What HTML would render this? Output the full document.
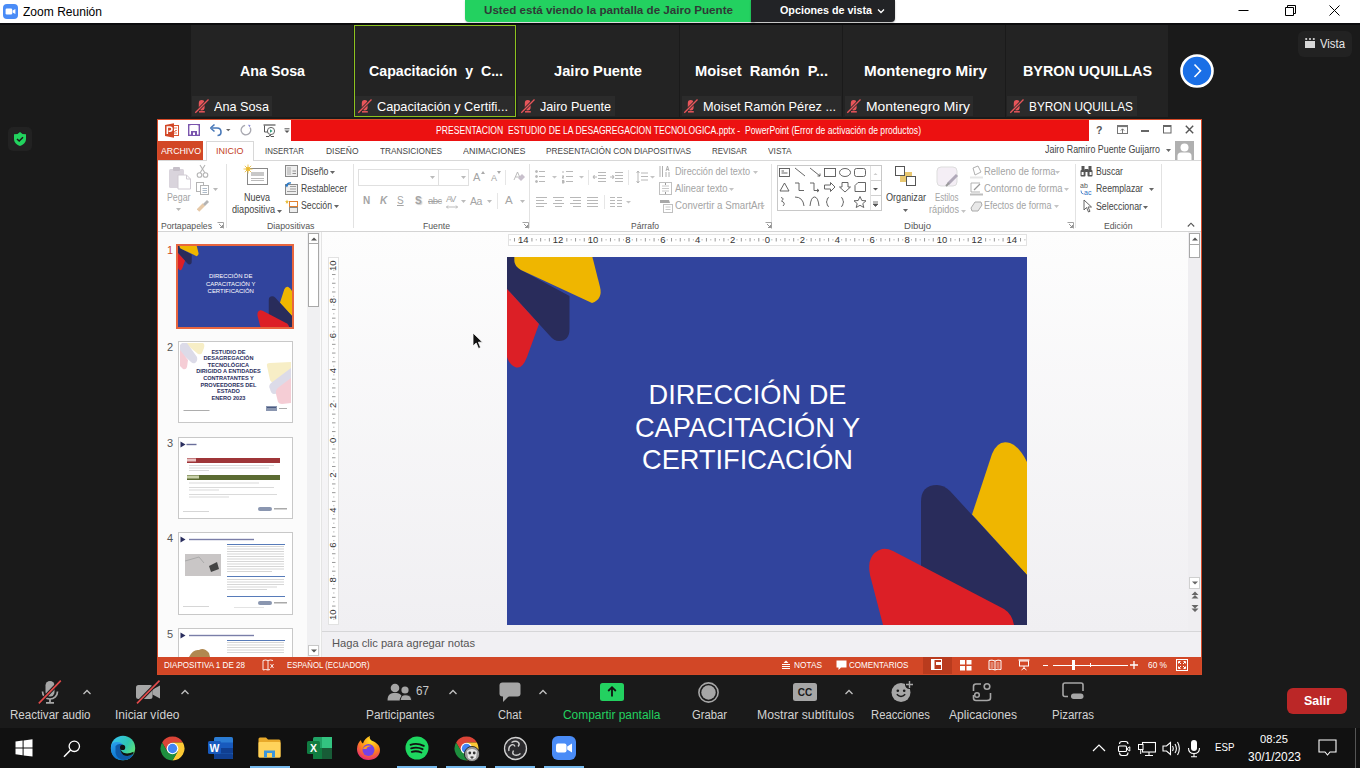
<!DOCTYPE html>
<html><head><meta charset="utf-8">
<style>
*{margin:0;padding:0;box-sizing:border-box}
html,body{width:1360px;height:768px;overflow:hidden;background:#1a1a1a;font-family:"Liberation Sans",sans-serif}
.a{position:absolute}
.t{position:absolute;white-space:nowrap;line-height:1}
.nm{top:63px;font-size:15px;font-weight:bold;color:#fff}
.lb{top:96px;height:20px;background:#2b2b2b}
.lt{top:100px;font-size:13px;color:#fff}
.mic{top:99px;width:16px;height:15px}
.car{top:688px;width:10px;height:8px}
.tb{top:709px;font-size:12px;color:#d2d2d2}
.tab{top:146px;font-size:9.5px;color:#444}
.sep{top:164px;width:1px;height:64px;background:#e2e2e2}
.gl{top:221px;font-size:9.5px;color:#555}
.lch{top:222px;width:7px;height:7px}
.rt{font-size:10px;color:#444}
.sb{top:661px;font-size:9px;color:#fff}
.rg{font-size:10px;color:#a4a4a4}
</style></head><body>
<svg width="0" height="0" style="position:absolute"><defs>
<g id="mmic"><rect x="4.8" y="1" width="5.8" height="10.5" rx="2.9" fill="#e8555a"></rect><path d="M5 12.8 H10.8" stroke="#e8555a" stroke-width="1.5"></path><path d="M1.3 13.8 L14.5 0.5" stroke="#2b2b2b" stroke-width="3"></path><path d="M1.3 13.8 L14.5 0.5" stroke="#e8555a" stroke-width="1.3"></path></g>
<g id="launch"><path d="M0.5 0.5 H6.5 V6.5" stroke="#999" stroke-width="0.9" fill="none"></path><path d="M2 2 L5.5 5.5 M5.5 3 V5.5 H3" stroke="#888" stroke-width="0.9" fill="none"></path></g>
<g id="caret"><path d="M1.5 6 L5 2.5 L8.5 6" stroke="#c0c0c0" stroke-width="1.3" fill="none"></path></g>
</defs></svg>
<!-- zoom title bar -->
<div class="a" style="left:0;top:0;width:1360px;height:23px;background:#fff"></div>
<div class="a" style="left:0;top:23px;width:1360px;height:2px;background:#0c0c0e"></div>
<svg class="a" style="left:3px;top:4px" width="15" height="15" viewBox="0 0 15 15"><rect x="0" y="0" width="15" height="15" rx="4" fill="#4a8cf7"></rect><rect x="2.6" y="4.6" width="6.6" height="5.8" rx="1.2" fill="#fff"></rect><path d="M9.6 6.6 L12.4 4.9 V10.1 L9.6 8.4Z" fill="#fff"></path></svg>
<div class="t" style="left: 23px; top: 6px; font-size: 12px; color: rgb(0, 0, 0); transform: scaleX(1.0036); transform-origin: 0px 0px;">Zoom Reunión</div>
<svg class="a" style="left:1230px;top:0" width="130" height="23"><path d="M8.5 10.5 H18.5" stroke="#000" stroke-width="1"></path><path d="M55.5 7.5 H63.5 V15.5 H55.5 Z M57.5 7.5 V5.5 H65.5 V13.5 H63.5" stroke="#000" stroke-width="1" fill="none"></path><path d="M99.5 5.5 L109.5 15.5 M109.5 5.5 L99.5 15.5" stroke="#000" stroke-width="1"></path></svg>
<!-- green banner -->
<div class="a" style="left:465px;top:0;width:290px;height:22px;background:#23d160;border-radius:0 0 0 4px;box-shadow:0 1px 2px rgba(0,0,0,.2)"></div>
<div class="t" style="left: 484px; top: 5px; font-size: 11.5px; font-weight: bold; color: rgb(47, 58, 54); transform: scaleX(1.0093); transform-origin: 0px 0px;">Usted está viendo la pantalla de Jairo Puente</div>
<div class="a" style="left:751px;top:0;width:144px;height:22px;background:#222326;border-radius:0 0 4px 0;box-shadow:0 1px 2px rgba(0,0,0,.3)"></div>
<div class="t" style="left: 780px; top: 5px; font-size: 11.5px; font-weight: bold; color: rgb(255, 255, 255); transform: scaleX(0.9346); transform-origin: 0px 0px;">Opciones de vista</div>
<svg class="a" style="left:877px;top:8px" width="8" height="6"><path d="M1 1.5 L4 4.5 L7 1.5" stroke="#fff" stroke-width="1.3" fill="none"></path></svg>
<!-- tiles -->
<div class="a" style="left:191px;top:25px;width:162px;height:92px;background:#232323"></div>
<div class="a" style="left:354px;top:25px;width:162px;height:92px;background:#232323;border:1px solid #8cc21f"></div>
<div class="a" style="left:517px;top:25px;width:162px;height:92px;background:#232323"></div>
<div class="a" style="left:680px;top:25px;width:162px;height:92px;background:#232323"></div>
<div class="a" style="left:843px;top:25px;width:162px;height:92px;background:#232323"></div>
<div class="a" style="left:1006px;top:25px;width:162px;height:92px;background:#232323"></div>
<div class="t nm" style="left: 240px; transform: scaleX(0.9509); transform-origin: 0px 0px;">Ana Sosa</div>
<div class="t nm" style="left: 369px; transform: scaleX(0.9455); transform-origin: 0px 0px;">Capacitación&nbsp; y&nbsp; C...</div>
<div class="t nm" style="left: 554px; transform: scaleX(0.9774); transform-origin: 0px 0px;">Jairo Puente</div>
<div class="t nm" style="left: 695px; transform: scaleX(0.9809); transform-origin: 0px 0px;">Moiset&nbsp; Ramón&nbsp; P...</div>
<div class="t nm" style="left: 864px; transform: scaleX(1.0178); transform-origin: 0px 0px;">Montenegro Miry</div>
<div class="t nm" style="left: 1023px; transform: scaleX(0.9556); transform-origin: 0px 0px;">BYRON UQUILLAS</div>
<div class="a lb" style="left:192px;width:80px"></div>
<div class="a lb" style="left:355px;width:159px"></div>
<div class="a lb" style="left:518px;width:97px"></div>
<div class="a lb" style="left:682px;width:159px"></div>
<div class="a lb" style="left:845px;width:128px"></div>
<div class="a lb" style="left:1007px;width:130px"></div>
<svg class="a mic" style="left:194px"><use href="#mmic"></use></svg>
<svg class="a mic" style="left:357px"><use href="#mmic"></use></svg>
<svg class="a mic" style="left:520px"><use href="#mmic"></use></svg>
<svg class="a mic" style="left:683px"><use href="#mmic"></use></svg>
<svg class="a mic" style="left:846px"><use href="#mmic"></use></svg>
<svg class="a mic" style="left:1009px"><use href="#mmic"></use></svg>
<div class="t lt" style="left: 214px; transform: scaleX(0.9756); transform-origin: 0px 0px;">Ana Sosa</div>
<div class="t lt" style="left: 377px; transform: scaleX(0.98); transform-origin: 0px 0px;">Capacitación y Certifi...</div>
<div class="t lt" style="left: 540px; transform: scaleX(0.9726); transform-origin: 0px 0px;">Jairo Puente</div>
<div class="t lt" style="left: 703px; transform: scaleX(0.9792); transform-origin: 0px 0px;">Moiset Ramón Pérez ...</div>
<div class="t lt" style="left: 866px; transform: scaleX(1.0662); transform-origin: 0px 0px;">Montenegro Miry</div>
<div class="t lt" style="left: 1029px; transform: scaleX(0.911); transform-origin: 0px 0px;">BYRON UQUILLAS</div>
<!-- next arrow -->
<svg class="a" style="left:1180px;top:54px" width="34" height="34"><circle cx="17" cy="17" r="15.5" fill="#1a6fe6" stroke="#fff" stroke-width="2.6"></circle><path d="M14.5 10.5 L20.5 16.8 L14.5 23" stroke="#fff" stroke-width="1.6" fill="none"></path></svg>
<!-- Vista -->
<div class="a" style="left:1298px;top:31px;width:54px;height:26px;background:#222;border-radius:6px"></div>
<svg class="a" style="left:1304px;top:37px" width="12" height="12"><rect x="1" y="4" width="10" height="7" fill="#d8d8d8"></rect><circle cx="2.2" cy="2" r="1.1" fill="#d8d8d8"></circle><circle cx="6" cy="2" r="1.1" fill="#d8d8d8"></circle><circle cx="9.8" cy="2" r="1.1" fill="#d8d8d8"></circle></svg>
<div class="t" style="left: 1320px; top: 38px; font-size: 12px; color: rgb(232, 232, 232); transform: scaleX(0.9445); transform-origin: 0px 0px;">Vista</div>
<!-- shield -->
<div class="a" style="left:8px;top:127px;width:24px;height:24px;background:#222;border-radius:5px"></div>
<svg class="a" style="left:13px;top:131px" width="14" height="16" viewBox="0 0 14 16"><path d="M7 1 L9.5 3 L13 3.3 V8 C13 11.5 10 14 7 15 C4 14 1 11.5 1 8 V3.3 L4.5 3 Z" fill="#22d35e"></path><path d="M4 8 L6.2 10 L10 6.2" stroke="#1a1a1a" stroke-width="1.5" fill="none"></path></svg>
<!-- PPT window -->
<div class="a" style="left:157px;top:119px;width:1045px;height:556px;background:#fff;border:1px solid #d64a28"></div>
<div class="a" style="left:291px;top:120px;width:798px;height:21px;background:#ec1111"></div>
<!-- QAT -->
<svg class="a" style="left:165px;top:123px" width="14" height="15" viewBox="0 0 14 15"><rect x="6.5" y="2.5" width="7" height="10" fill="#fff" stroke="#d9542f" stroke-width="1"></rect><path d="M8 5 H12 M10 7.5 H12 M8 10 H12" stroke="#e07050" stroke-width="0.9"></path><path d="M8 5 V8.5 H10.5" stroke="#e07050" stroke-width="0.9" fill="none"></path><path d="M0 2 L9 0.3 V14.7 L0 13Z" fill="#d24726"></path><path d="M2.3 11 V4 H4.8 Q7 4 7 6.1 Q7 8.2 4.8 8.2 H3.6" stroke="#fff" stroke-width="1.5" fill="none"></path></svg>
<svg class="a" style="left:188px;top:124px" width="12" height="12"><rect x="0.7" y="0.7" width="10.6" height="10.6" fill="none" stroke="#7a55ad" stroke-width="1.4"></rect><rect x="2.5" y="1" width="7" height="4" fill="#fff"></rect><rect x="3" y="7" width="6" height="4" fill="#7a55ad"></rect><rect x="5" y="8.5" width="2" height="2.5" fill="#fff"></rect></svg>
<svg class="a" style="left:209px;top:123px" width="24" height="14"><path d="M3 5 H8 Q12 5 12 9 Q12 12.5 8.5 12.5" stroke="#4878b8" stroke-width="1.6" fill="none"></path><path d="M1.5 5 L5.5 1.5 M1.5 5 L5.5 8.5" stroke="#4878b8" stroke-width="1.6" fill="none"></path><path d="M17 6 H21.5 L19.25 8.3Z" fill="#666"></path></svg>
<svg class="a" style="left:240px;top:124px" width="12" height="12"><path d="M8.5 2.2 A4.8 4.8 0 1 1 3 2.2" stroke="#a8a8b0" stroke-width="1.3" fill="none" transform="rotate(25 6 6.5)"></path><path d="M8 0.8 L10.5 1 L9.6 3.6Z" fill="#8f8fd6"></path></svg>
<svg class="a" style="left:263px;top:124px" width="13" height="14"><path d="M0.5 1 H12.5" stroke="#555" stroke-width="1.2"></path><path d="M1.5 1.5 V8 H5" stroke="#555" stroke-width="1" fill="none"></path><circle cx="8" cy="7" r="3.6" fill="none" stroke="#666" stroke-width="1"></circle><path d="M7 5.3 L9.6 7 L7 8.7Z" fill="#30a080"></path><path d="M3 12.5 H6 L7 11 L8 12.5 H11" stroke="#555" stroke-width="1" fill="none"></path></svg>
<svg class="a" style="left:284px;top:128px" width="6" height="6"><path d="M0.5 0.8 H5.5" stroke="#555" stroke-width="1"></path><path d="M0.5 2.5 H5.5 L3 5Z" fill="#555"></path></svg>
<div class="t" style="left: 436px; top: 126px; font-size: 10px; color: rgb(255, 255, 255); transform: scaleX(0.8604); transform-origin: 0px 0px;">PRESENTACION&nbsp; ESTUDIO DE LA DESAGREGACION TECNOLOGICA.pptx -&nbsp; PowerPoint (Error de activación de productos)</div>
<!-- window buttons -->
<div class="t" style="left:1096px;top:125px;font-size:10.5px;font-weight:bold;color:#555">?</div>
<svg class="a" style="left:1117px;top:125px" width="12" height="10"><rect x="0.5" y="0.5" width="10" height="8" fill="none" stroke="#777" stroke-width="1"></rect><path d="M0.5 1.5 H10.5" stroke="#777" stroke-width="1.2"></path><path d="M5.5 8 V4 M3.8 5.6 L5.5 3.8 L7.2 5.6" stroke="#666" stroke-width="0.9" fill="none"></path></svg>
<div class="a" style="left:1141px;top:130px;width:8px;height:2px;background:#666"></div>
<svg class="a" style="left:1163px;top:125px" width="9" height="9"><rect x="0.5" y="0.5" width="7.5" height="7.5" fill="none" stroke="#666" stroke-width="1"></rect><path d="M0.5 1.2 H8" stroke="#666" stroke-width="1.6"></path></svg>
<svg class="a" style="left:1185px;top:125px" width="9" height="9"><path d="M0.8 0.8 L8.2 8.2 M8.2 0.8 L0.8 8.2" stroke="#555" stroke-width="1.4"></path></svg>
<!-- tabs -->
<div class="a" style="left:158px;top:160px;width:1043px;height:1px;background:#d8d8d8"></div>
<div class="a" style="left:158px;top:141px;width:45px;height:19px;background:#d24726"></div>
<div class="a" style="left:206px;top:141px;width:48px;height:20px;background:#fff;border:1px solid #d8d8d8;border-bottom:none"></div>
<div class="t tab" style="left: 161px; color: rgb(255, 255, 255); transform: scaleX(0.9239); transform-origin: 0px 0px;">ARCHIVO</div>
<div class="t tab" style="left: 216px; color: rgb(196, 62, 28); transform: scaleX(0.9473); transform-origin: 0px 0px;">INICIO</div>
<div class="t tab" style="left: 265px; transform: scaleX(0.8268); transform-origin: 0px 0px;">INSERTAR</div>
<div class="t tab" style="left: 325.5px; transform: scaleX(0.8919); transform-origin: 0px 0px;">DISEÑO</div>
<div class="t tab" style="left: 379.5px; transform: scaleX(0.87); transform-origin: 0px 0px;">TRANSICIONES</div>
<div class="t tab" style="left: 462.5px; transform: scaleX(0.9396); transform-origin: 0px 0px;">ANIMACIONES</div>
<div class="t tab" style="left: 546px; transform: scaleX(0.8738); transform-origin: 0px 0px;">PRESENTACIÓN CON DIAPOSITIVAS</div>
<div class="t tab" style="left: 712px; transform: scaleX(0.839); transform-origin: 0px 0px;">REVISAR</div>
<div class="t tab" style="left: 767.5px; transform: scaleX(0.8785); transform-origin: 0px 0px;">VISTA</div>
<div class="t" style="left: 1045px; top: 145px; font-size: 10px; color: rgb(68, 68, 68); transform: scaleX(0.888); transform-origin: 0px 0px;">Jairo Ramiro Puente Guijarro</div>
<svg class="a" style="left:1166px;top:149px" width="5" height="3"><path d="M0 0 H5 L2.5 3Z" fill="#666"></path></svg>
<svg class="a" style="left:1175px;top:141px" width="19" height="19"><rect width="19" height="19" fill="#b0b0b0"></rect><circle cx="9.5" cy="6.5" r="4" fill="#fff"></circle><path d="M2.5 19 V15 Q2.5 11.5 6 11.5 H13 Q16.5 11.5 16.5 15 V19Z" fill="#fff"></path></svg>
<!-- ribbon -->
<div class="a" style="left:158px;top:231px;width:1043px;height:1px;background:#d4d4d4"></div>
<div class="a sep" style="left:226px"></div>
<div class="a sep" style="left:353px"></div>
<div class="a sep" style="left:529px"></div>
<div class="a sep" style="left:771px"></div>
<div class="a sep" style="left:1075px"></div>
<div class="a sep" style="left:1161px"></div>
<div class="t gl" style="left: 160.5px; transform: scaleX(0.911); transform-origin: 0px 0px;">Portapapeles</div>
<div class="t gl" style="left: 266.5px; transform: scaleX(0.9274); transform-origin: 0px 0px;">Diapositivas</div>
<div class="t gl" style="left: 422.5px; transform: scaleX(0.9128); transform-origin: 0px 0px;">Fuente</div>
<div class="t gl" style="left: 630.5px; transform: scaleX(0.8987); transform-origin: 0px 0px;">Párrafo</div>
<div class="t gl" style="left: 904px; transform: scaleX(1.0023); transform-origin: 0px 0px;">Dibujo</div>
<div class="t gl" style="left: 1103.5px; transform: scaleX(0.9143); transform-origin: 0px 0px;">Edición</div>
<svg class="a lch" style="left:217px"><use href="#launch"></use></svg>
<svg class="a lch" style="left:522px"><use href="#launch"></use></svg>
<svg class="a lch" style="left:765px"><use href="#launch"></use></svg>
<svg class="a lch" style="left:1067px"><use href="#launch"></use></svg>
<svg class="a" style="left:1187px;top:222px" width="8" height="5"><path d="M0.8 4.5 L4 1.2 L7.2 4.5" stroke="#555" stroke-width="1.1" fill="none"></path></svg>
<!-- Portapapeles -->
<svg class="a" style="left:168px;top:166px" width="24" height="24"><rect x="1" y="3" width="15" height="19" rx="1.5" fill="#d9d4dc"></rect><rect x="5" y="1" width="7" height="4" rx="1" fill="#c6c0c9"></rect><path d="M10 9 H18.5 L22.5 13 V23 H10Z" fill="#fff" stroke="#d0cbd3" stroke-width="1"></path><path d="M18.5 9 V13 H22.5" fill="none" stroke="#d0cbd3" stroke-width="1"></path></svg>
<div class="t rg" style="left: 167px; top: 193px; transform: scaleX(0.8806); transform-origin: 0px 0px;">Pegar</div>
<svg class="a" style="left:176px;top:208px" width="5" height="3"><path d="M0 0 H5 L2.5 3Z" fill="#b8b8b8"></path></svg>
<svg class="a" style="left:196px;top:164px" width="13" height="14"><path d="M4 1 L9 9 M9 1 L4 9" stroke="#b4b4b4" stroke-width="1.1"></path><circle cx="3.5" cy="11" r="2.3" fill="none" stroke="#b4b4b4" stroke-width="1.1"></circle><circle cx="9.5" cy="11" r="2.3" fill="none" stroke="#b4b4b4" stroke-width="1.1"></circle></svg>
<svg class="a" style="left:196px;top:182px" width="14" height="13"><rect x="0.5" y="0.5" width="7" height="9" fill="#fff" stroke="#b4b4b4"></rect><rect x="4.5" y="3.5" width="8" height="9" fill="#fff" stroke="#b4b4b4"></rect><path d="M6.5 6.5 H11 M6.5 8.5 H11 M6.5 10.5 H11" stroke="#9ab" stroke-width="0.8"></path></svg>
<svg class="a" style="left:213px;top:188px" width="5" height="3"><path d="M0 0 H5 L2.5 3Z" fill="#b8b8b8"></path></svg>
<svg class="a" style="left:197px;top:199px" width="13" height="13"><path d="M1 11.5 L7 5.5" stroke="#e6c9a8" stroke-width="3.5"></path><path d="M6 5 L10 1 L12 3 L8 7Z" fill="#b4b4b4"></path></svg>
<!-- Diapositivas -->
<svg class="a" style="left:242px;top:164px" width="27" height="23"><rect x="5.5" y="4.5" width="20" height="16" fill="#fff" stroke="#888" stroke-width="1"></rect><rect x="9" y="8" width="13" height="4" fill="#c8c8c8"></rect><path d="M9 14.5 H22 M9 16.5 H22" stroke="#aaa" stroke-width="0.8"></path><circle cx="6" cy="5" r="2.3" fill="#f3c94b"></circle><path d="M6 0.5 V9.5 M1.5 5 H10.5 M2.8 1.8 L9.2 8.2 M9.2 1.8 L2.8 8.2" stroke="#e8b830" stroke-width="0.8"></path></svg>
<div class="t rt" style="left: 243.5px; top: 193px; transform: scaleX(0.8995); transform-origin: 0px 0px;">Nueva</div>
<div class="t rt" style="left: 232px; top: 205px; transform: scaleX(0.9098); transform-origin: 0px 0px;">diapositiva</div>
<svg class="a" style="left:277px;top:210px" width="5" height="3"><path d="M0 0 H5 L2.5 3Z" fill="#666"></path></svg>
<svg class="a" style="left:285px;top:165px" width="14" height="13"><rect x="0.5" y="0.5" width="12" height="11" fill="#eee" stroke="#888"></rect><rect x="2" y="2" width="4" height="8" fill="#ccc"></rect><path d="M7.5 6 H11 M7.5 8.5 H11" stroke="#777" stroke-width="0.8"></path></svg>
<div class="t rt" style="left: 300.5px; top: 167px; transform: scaleX(0.8831); transform-origin: 0px 0px;">Diseño</div>
<svg class="a" style="left:330px;top:171px" width="5" height="3"><path d="M0 0 H5 L2.5 3Z" fill="#666"></path></svg>
<svg class="a" style="left:285px;top:182px" width="14" height="13"><rect x="0.5" y="2.5" width="12" height="10" fill="#eee" stroke="#888"></rect><path d="M5 4.5 H11 M5 7 H11 M2 9.5 H11" stroke="#888" stroke-width="0.8"></path><path d="M1.5 4 Q2 0.5 6 1" stroke="#2a7ac8" stroke-width="1.3" fill="none"></path><path d="M0 3 L2 5.5 L3.5 2.5Z" fill="#2a7ac8"></path></svg>
<div class="t rt" style="left: 300.5px; top: 184px; transform: scaleX(0.8621); transform-origin: 0px 0px;">Restablecer</div>
<svg class="a" style="left:285px;top:199px" width="14" height="14"><rect x="4.5" y="2.5" width="8" height="5" fill="#fff" stroke="#e08030"></rect><rect x="4.5" y="8.5" width="8" height="5" fill="#eee" stroke="#888"></rect><path d="M2 0.5 L2.6 2 L4 2.2 L2.9 3.2 L3.2 4.8 L2 4 L0.8 4.8 L1.1 3.2 L0 2.2 L1.4 2Z" fill="#e8c040"></path></svg>
<div class="t rt" style="left: 300.5px; top: 201px; transform: scaleX(0.8713); transform-origin: 0px 0px;">Sección</div>
<svg class="a" style="left:334px;top:205px" width="5" height="3"><path d="M0 0 H5 L2.5 3Z" fill="#666"></path></svg>
<!-- Fuente -->
<div class="a" style="left:358px;top:169px;width:111px;height:17px;border:1px solid #e0e0e0;background:#fff"></div>
<div class="a" style="left:438px;top:170px;width:1px;height:15px;background:#e0e0e0"></div>
<svg class="a" style="left:430px;top:176px" width="5" height="3"><path d="M0 0 H5 L2.5 3Z" fill="#bbb"></path></svg>
<svg class="a" style="left:461px;top:176px" width="5" height="3"><path d="M0 0 H5 L2.5 3Z" fill="#bbb"></path></svg>
<div class="t rg" style="left:473px;top:172px;font-size:11px">A</div>
<svg class="a" style="left:481px;top:171px" width="4" height="3"><path d="M0 3 L2 0 L4 3Z" fill="#aaa"></path></svg>
<div class="t rg" style="left:491px;top:174px;font-size:9px">A</div>
<svg class="a" style="left:497px;top:171px" width="4" height="3"><path d="M0 0 H4 L2 3Z" fill="#aaa"></path></svg>
<div class="a" style="left:505px;top:170px;width:1px;height:15px;background:#e6e6e6"></div>
<svg class="a" style="left:513px;top:171px" width="12" height="11"><path d="M1 9 L4.5 1 L8 9 M2.5 6 H6.5" stroke="#b4b4b4" stroke-width="0.9" fill="none"></path><path d="M5 7 L9 3 L12 6 L8 10Z" fill="#c8c0cc"></path></svg>
<div class="t rg" style="left:363px;top:196px;font-size:10px;font-weight:bold">N</div>
<div class="t rg" style="left:380px;top:196px;font-size:10px;font-style:italic;font-weight:bold">K</div>
<div class="t rg" style="left:397px;top:196px;font-size:10px;text-decoration:underline">S</div>
<div class="t rg" style="left:415px;top:196px;font-size:10px;font-weight:bold;text-shadow:1px 1px 1px #ccc">S</div>
<div class="t rg" style="left:428px;top:196px;font-size:9.5px;letter-spacing:-0.5px;text-decoration:line-through">abc</div>
<div class="t rg" style="left:446px;top:195px;font-size:9px;letter-spacing:-1px">AV</div>
<svg class="a" style="left:446px;top:205px" width="12" height="4"><path d="M0.5 2 H11.5 M2 0.5 L0.5 2 L2 3.5 M10 0.5 L11.5 2 L10 3.5" stroke="#aaa" stroke-width="0.8" fill="none"></path></svg>
<svg class="a" style="left:461px;top:200px" width="5" height="3"><path d="M0 0 H5 L2.5 3Z" fill="#bbb"></path></svg>
<div class="t rg" style="left:470px;top:196px;font-size:10.5px;letter-spacing:-0.5px">Aa</div>
<svg class="a" style="left:487px;top:200px" width="5" height="3"><path d="M0 0 H5 L2.5 3Z" fill="#bbb"></path></svg>
<div class="a" style="left:497px;top:193px;width:1px;height:16px;background:#e6e6e6"></div>
<div class="t rg" style="left:505px;top:195px;font-size:11.5px">A</div>
<svg class="a" style="left:520px;top:200px" width="5" height="3"><path d="M0 0 H5 L2.5 3Z" fill="#bbb"></path></svg>
<!-- Parrafo -->
<svg class="a" style="left:535px;top:170px" width="120" height="16"><g stroke="#b8b8b8" stroke-width="1" fill="#b8b8b8"><circle cx="1.5" cy="1.5" r="1"></circle><circle cx="1.5" cy="6.5" r="1"></circle><circle cx="1.5" cy="11.5" r="1"></circle><path d="M4 1.5 H10 M4 6.5 H10 M4 11.5 H10"></path><path d="M28 1 V3 M27 6 H29 L27 8 H29 M27 10.5 H29 V13 H27"></path><path d="M31 1.5 H38 M31 6.5 H38 M31 11.5 H38"></path><path d="M63 2.5 H71 M63 5.5 H71 M63 8.5 H71 M63 11.5 H71 M58 7 H62 M59.5 5 L58 7 L59.5 9"></path><path d="M80 2.5 H88 M80 5.5 H88 M80 8.5 H88 M80 11.5 H88 M75 7 H79 M77.5 5 L79 7 L77.5 9"></path><path d="M106 3 H113 M106 6.5 H113 M106 10 H113 M103 1 V13 M101.5 2.5 L103 1 L104.5 2.5 M101.5 11.5 L103 13 L104.5 11.5"></path></g><path d="M17 6 H22 L19.5 8.5Z M44 6 H49 L46.5 8.5Z M115 6 H120 L117.5 8.5Z" fill="#c4c4c4"></path><path d="M53.5 0 V15 M93.5 0 V15" stroke="#e6e6e6"></path></svg>
<svg class="a" style="left:535px;top:195px" width="96" height="14"><g stroke="#b8b8b8" stroke-width="1"><path d="M1 2.5 H12 M1 5.5 H9 M1 8.5 H12 M1 11.5 H9"></path><path d="M18 2.5 H29 M20 5.5 H27 M18 8.5 H29 M20 11.5 H27"></path><path d="M35 2.5 H46 M38 5.5 H46 M35 8.5 H46 M38 11.5 H46"></path><path d="M52 2.5 H63 M52 5.5 H63 M52 8.5 H63 M52 11.5 H63"></path><path d="M75 2.5 H80 M75 5.5 H80 M75 8.5 H80 M75 11.5 H80 M82 2.5 H87 M82 5.5 H87 M82 8.5 H87 M82 11.5 H87"></path></g><path d="M69.5 0 V14" stroke="#e6e6e6"></path><path d="M91 6 H96 L93.5 8.5Z" fill="#c4c4c4"></path></svg>
<svg class="a" style="left:659px;top:165px" width="14" height="13"><path d="M1 1 V12 M3.5 1 V12 M7 12 V7 M10 12 V7" stroke="#b0b0b0" stroke-width="1"></path><path d="M7 6 L8.5 1 L10 6 M7.6 4.5 H9.4" stroke="#a8a8a8" stroke-width="0.9" fill="none"></path></svg>
<div class="t rg" style="left: 675px; top: 167px; transform: scaleX(0.9117); transform-origin: 0px 0px;">Dirección del texto</div>
<svg class="a" style="left:753px;top:171px" width="5" height="3"><path d="M0 0 H5 L2.5 3Z" fill="#c4c4c4"></path></svg>
<svg class="a" style="left:659px;top:182px" width="14" height="13"><rect x="0.5" y="0.5" width="12" height="12" fill="none" stroke="#c0c0c0"></rect><path d="M3 4 H10 M3 6.5 H10 M3 9 H10" stroke="#c8c8c8"></path><path d="M6.5 1 V3 M6.5 10 V12" stroke="#999"></path></svg>
<div class="t rg" style="left: 675px; top: 184px; transform: scaleX(0.9444); transform-origin: 0px 0px;">Alinear texto</div>
<svg class="a" style="left:729px;top:188px" width="5" height="3"><path d="M0 0 H5 L2.5 3Z" fill="#c4c4c4"></path></svg>
<svg class="a" style="left:659px;top:199px" width="15" height="14"><path d="M1 1 H10 L11 4 H1Z" fill="#a8a8a8"></path><rect x="4.5" y="5.5" width="9" height="8" fill="#fff" stroke="#c0c0c0"></rect><path d="M6.5 8 H11.5 M6.5 10.5 H11.5" stroke="#c8c8c8"></path></svg>
<div class="t rg" style="left: 675px; top: 201px; transform: scaleX(0.971); transform-origin: 0px 0px;">Convertir a SmartArt</div>
<svg class="a" style="left:760px;top:205px" width="5" height="3"><path d="M0 0 H5 L2.5 3Z" fill="#c4c4c4"></path></svg>
<!-- Dibujo -->
<div class="a" style="left:777px;top:165px;width:105px;height:46px;border:1px solid #c8c8c8;background:#fff"></div>
<div class="a" style="left:870px;top:166px;width:1px;height:44px;background:#e0e0e0"></div>
<div class="a" style="left:871px;top:180px;width:10px;height:1px;background:#d0d0d0"></div>
<div class="a" style="left:871px;top:195px;width:10px;height:1px;background:#d0d0d0"></div>
<svg class="a" style="left:778px;top:166px" width="104" height="45"><g stroke="#555" stroke-width="0.9" fill="none"><rect x="1.5" y="2.5" width="10" height="8"></rect><path d="M3.5 5 H6 M3.5 7 H9.5"></path><path d="M17 2 L27 10"></path><path d="M32 2 L42 10 M39.5 10 H42 V7.5"></path><rect x="46.5" y="2.5" width="11" height="8"></rect><ellipse cx="67" cy="6.5" rx="5.5" ry="4"></ellipse><rect x="76.5" y="2.5" width="11" height="8" rx="2"></rect><path d="M2 25 L6.5 17 L11 25Z"></path><path d="M17 17 H21 V24.5 H26"></path><path d="M32 17 H36 V24.5 H41 M39 23 L41 24.5 L39 26"></path><path d="M46.5 19 H52.5 V16.5 L57 21 L52.5 25.5 V23 H46.5Z"></path><path d="M64 16.5 H70 V21 H72.5 L67 26 L61.5 21 H64Z"></path><path d="M77 25.5 V19.5 L80 16.5 H87.5 V25.5Z"></path><path d="M3 31.5 Q7 32.5 3.5 35 Q8 37 5 40"></path><path d="M17 31 Q25 31 26 40"></path><path d="M32 40 Q33 31 36.5 31 Q40 31 41 40"></path><path d="M51 31.5 Q49 31.5 49 34.5 Q49 36 48 36 Q49 36 49 37.5 Q49 40.5 51 40.5"></path><path d="M63 31.5 Q65 31.5 65 34.5 Q65 36 66 36 Q65 36 65 37.5 Q65 40.5 63 40.5"></path><path d="M82 30.5 L83.8 34.5 L88 34.8 L84.8 37.6 L85.8 41.5 L82 39.3 L78.2 41.5 L79.2 37.6 L76 34.8 L80.2 34.5Z"></path></g><path d="M95.5 9 L97.5 7 L99.5 9Z" fill="#ccc"></path><path d="M95 22 H100 L97.5 24.5Z" fill="#555"></path><path d="M95 36 H100 M95 38 H100 L97.5 40.5Z" stroke="#555" stroke-width="0.8" fill="#555"></path></svg>
<svg class="a" style="left:894px;top:165px" width="23" height="23"><rect x="6" y="7" width="12" height="10" fill="#e8c770"></rect><rect x="1.5" y="1.5" width="9" height="9" fill="#fff" stroke="#555"></rect><rect x="12.5" y="11.5" width="9" height="9" fill="#fff" stroke="#555"></rect></svg>
<div class="t rt" style="left: 885.5px; top: 193px; transform: scaleX(0.911); transform-origin: 0px 0px;">Organizar</div>
<svg class="a" style="left:903px;top:209px" width="5" height="3"><path d="M0 0 H5 L2.5 3Z" fill="#666"></path></svg>
<svg class="a" style="left:936px;top:166px" width="24" height="24"><rect x="1" y="1" width="20" height="19" rx="4" fill="#f4eef5" stroke="#ddd"></rect><path d="M12 18 L21 9" stroke="#b0a8b8" stroke-width="3"></path><path d="M10 20 L13 17" stroke="#999" stroke-width="2"></path></svg>
<div class="t rg" style="left: 935px; top: 193px; transform: scaleX(0.7979); transform-origin: 0px 0px;">Estilos</div>
<div class="t rg" style="left: 929px; top: 205px; transform: scaleX(0.9143); transform-origin: 0px 0px;">rápidos</div>
<svg class="a" style="left:961px;top:210px" width="5" height="3"><path d="M0 0 H5 L2.5 3Z" fill="#c4c4c4"></path></svg>
<svg class="a" style="left:969px;top:165px" width="15" height="14"><path d="M4 3 L9 1 L12 7 L6 10Z" fill="#fff" stroke="#b0b0b0"></path><path d="M1 12.5 H14" stroke="#e6e6e6" stroke-width="2"></path></svg>
<div class="t rg" style="left: 984px; top: 167px; transform: scaleX(0.9389); transform-origin: 0px 0px;">Relleno de forma</div>
<svg class="a" style="left:1055px;top:171px" width="5" height="3"><path d="M0 0 H5 L2.5 3Z" fill="#c4c4c4"></path></svg>
<svg class="a" style="left:969px;top:182px" width="15" height="14"><path d="M2 1 H11 M2 1 V10 H11" stroke="#aaa" stroke-width="0.9" fill="none"></path><path d="M5 8 L11 2" stroke="#999" stroke-width="1.3"></path><path d="M1 12.5 H14" stroke="#bdbdbd" stroke-width="2"></path></svg>
<div class="t rg" style="left: 984px; top: 184px; transform: scaleX(0.9414); transform-origin: 0px 0px;">Contorno de forma</div>
<svg class="a" style="left:1064px;top:188px" width="5" height="3"><path d="M0 0 H5 L2.5 3Z" fill="#c4c4c4"></path></svg>
<svg class="a" style="left:969px;top:199px" width="15" height="14"><path d="M2 9 L6 3 H12 L13 6 L9 12 H3Z" fill="#e8e8e8" stroke="#aaa"></path></svg>
<div class="t rg" style="left: 984px; top: 201px; transform: scaleX(0.8929); transform-origin: 0px 0px;">Efectos de forma</div>
<svg class="a" style="left:1054px;top:205px" width="5" height="3"><path d="M0 0 H5 L2.5 3Z" fill="#c4c4c4"></path></svg>
<!-- Edicion -->
<svg class="a" style="left:1080px;top:165px" width="13" height="12"><g fill="#555"><rect x="0.5" y="5" width="5" height="6.5" rx="1"></rect><rect x="7.5" y="5" width="5" height="6.5" rx="1"></rect><rect x="1.5" y="1" width="3" height="4"></rect><rect x="8.5" y="1" width="3" height="4"></rect><rect x="4.5" y="4" width="4" height="3"></rect></g><rect x="1.6" y="7" width="2" height="3" fill="#fff"></rect><rect x="9.6" y="7" width="2" height="3" fill="#fff"></rect></svg>
<div class="t rt" style="left: 1095.5px; top: 167px; transform: scaleX(0.8675); transform-origin: 0px 0px;">Buscar</div>
<svg class="a" style="left:1080px;top:182px" width="14" height="14"><text x="0" y="6" font-family="Liberation Sans" font-size="7" fill="#555">ab</text><text x="4" y="12.5" font-family="Liberation Sans" font-size="7" fill="#2b6fc4">ac</text><path d="M1 8.5 Q1 12 3.5 12" stroke="#2b6fc4" stroke-width="0.8" fill="none"></path></svg>
<div class="t rt" style="left: 1095.5px; top: 184px; transform: scaleX(0.8716); transform-origin: 0px 0px;">Reemplazar</div>
<svg class="a" style="left:1149px;top:188px" width="5" height="3"><path d="M0 0 H5 L2.5 3Z" fill="#666"></path></svg>
<svg class="a" style="left:1083px;top:199px" width="9" height="14"><path d="M1 1 V11 L3.5 8.5 L5.5 13 L7 12.3 L5 8 H8.5Z" fill="#fff" stroke="#555" stroke-width="0.9"></path></svg>
<div class="t rt" style="left: 1095.5px; top: 202px; transform: scaleX(0.8801); transform-origin: 0px 0px;">Seleccionar</div>
<svg class="a" style="left:1143px;top:206px" width="5" height="3"><path d="M0 0 H5 L2.5 3Z" fill="#666"></path></svg>
<!-- main area -->
<div class="a" style="left:158px;top:232px;width:164px;height:425px;background:#fbfbfb"></div>
<div class="a" style="left:307px;top:232px;width:13px;height:425px;background:#f0f0f2"></div>
<div class="a" style="left:321px;top:232px;width:1px;height:425px;background:#e4e4e4"></div>
<div class="a" style="left:308px;top:233px;width:11px;height:11px;background:#fff;border:1px solid #a8a8a8"></div>
<svg class="a" style="left:311px;top:237px" width="6" height="4"><path d="M0 3.5 L3 0.5 L6 3.5Z" fill="#555"></path></svg>
<div class="a" style="left:308px;top:243px;width:11px;height:64px;background:#fff;border:1px solid #a8a8a8"></div>
<div class="a" style="left:308px;top:645px;width:11px;height:11px;background:#fff;border:1px solid #c8c8c8"></div>
<svg class="a" style="left:311px;top:649px" width="6" height="4"><path d="M0 0.5 L3 3.5 L6 0.5Z" fill="#555"></path></svg>
<div class="a" style="left:322px;top:232px;width:866px;height:399px;background:linear-gradient(#fdfdfd,#f0eff2)"></div>
<div class="a" style="left:322px;top:631px;width:879px;height:1px;background:#d6d6d8"></div>
<div class="a" style="left:322px;top:632px;width:879px;height:25px;background:#f1f0f3"></div>
<div class="t" style="left: 332px; top: 638px; font-size: 11.5px; color: rgb(85, 85, 85); transform: scaleX(0.9684); transform-origin: 0px 0px;">Haga clic para agregar notas</div>
<div class="a" style="left:1188px;top:232px;width:13px;height:399px;background:#efeef1"></div>
<div class="a" style="left:1189px;top:233px;width:11px;height:12px;background:#fff;border:1px solid #a8a8a8"></div>
<svg class="a" style="left:1192px;top:237px" width="6" height="4"><path d="M0 3.5 L3 0.5 L6 3.5Z" fill="#555"></path></svg>
<div class="a" style="left:1189px;top:244px;width:11px;height:14px;background:#fff;border:1px solid #a8a8a8"></div>
<div class="a" style="left:1189px;top:577px;width:11px;height:12px;background:#fff;border:1px solid #d0d0d0"></div>
<svg class="a" style="left:1192px;top:581px" width="6" height="4"><path d="M0 0.5 L3 3.5 L6 0.5Z" fill="#666"></path></svg>
<svg class="a" style="left:1191px;top:591px" width="8" height="22"><path d="M0.5 4 L4 0.5 L7.5 4Z M0.5 7.5 L4 4 L7.5 7.5Z" fill="#666"></path><path d="M0.5 14 L4 17.5 L7.5 14Z M0.5 17.5 L4 21 L7.5 17.5Z" fill="#666"></path></svg>
<!-- rulers -->
<div class="a" style="left:508px;top:234px;width:519px;height:12px;background:#fff;border:1px solid #e2e2e2"></div>
<svg class="a" style="left:508px;top:234px" width="519" height="12"><rect x="1.61" y="5.2" width="1" height="1.2" fill="#aaa"></rect><rect x="5.98" y="4" width="1" height="3.5" fill="#999"></rect><rect x="10.34" y="5.2" width="1" height="1.2" fill="#aaa"></rect><text x="15.20" y="9.3" font-family="Liberation Sans" font-size="9.5" fill="#333" text-anchor="middle">14</text><rect x="19.06" y="5.2" width="1" height="1.2" fill="#aaa"></rect><rect x="23.43" y="4" width="1" height="3.5" fill="#999"></rect><rect x="27.79" y="5.2" width="1" height="1.2" fill="#aaa"></rect><rect x="32.15" y="4" width="1" height="3.5" fill="#999"></rect><rect x="36.51" y="5.2" width="1" height="1.2" fill="#aaa"></rect><rect x="40.88" y="4" width="1" height="3.5" fill="#999"></rect><rect x="45.24" y="5.2" width="1" height="1.2" fill="#aaa"></rect><text x="50.10" y="9.3" font-family="Liberation Sans" font-size="9.5" fill="#333" text-anchor="middle">12</text><rect x="53.96" y="5.2" width="1" height="1.2" fill="#aaa"></rect><rect x="58.33" y="4" width="1" height="3.5" fill="#999"></rect><rect x="62.69" y="5.2" width="1" height="1.2" fill="#aaa"></rect><rect x="67.05" y="4" width="1" height="3.5" fill="#999"></rect><rect x="71.41" y="5.2" width="1" height="1.2" fill="#aaa"></rect><rect x="75.78" y="4" width="1" height="3.5" fill="#999"></rect><rect x="80.14" y="5.2" width="1" height="1.2" fill="#aaa"></rect><text x="85.00" y="9.3" font-family="Liberation Sans" font-size="9.5" fill="#333" text-anchor="middle">10</text><rect x="88.86" y="5.2" width="1" height="1.2" fill="#aaa"></rect><rect x="93.22" y="4" width="1" height="3.5" fill="#999"></rect><rect x="97.59" y="5.2" width="1" height="1.2" fill="#aaa"></rect><rect x="101.95" y="4" width="1" height="3.5" fill="#999"></rect><rect x="106.31" y="5.2" width="1" height="1.2" fill="#aaa"></rect><rect x="110.68" y="4" width="1" height="3.5" fill="#999"></rect><rect x="115.04" y="5.2" width="1" height="1.2" fill="#aaa"></rect><text x="119.90" y="9.3" font-family="Liberation Sans" font-size="9.5" fill="#333" text-anchor="middle">8</text><rect x="123.76" y="5.2" width="1" height="1.2" fill="#aaa"></rect><rect x="128.12" y="4" width="1" height="3.5" fill="#999"></rect><rect x="132.49" y="5.2" width="1" height="1.2" fill="#aaa"></rect><rect x="136.85" y="4" width="1" height="3.5" fill="#999"></rect><rect x="141.21" y="5.2" width="1" height="1.2" fill="#aaa"></rect><rect x="145.57" y="4" width="1" height="3.5" fill="#999"></rect><rect x="149.94" y="5.2" width="1" height="1.2" fill="#aaa"></rect><text x="154.80" y="9.3" font-family="Liberation Sans" font-size="9.5" fill="#333" text-anchor="middle">6</text><rect x="158.66" y="5.2" width="1" height="1.2" fill="#aaa"></rect><rect x="163.03" y="4" width="1" height="3.5" fill="#999"></rect><rect x="167.39" y="5.2" width="1" height="1.2" fill="#aaa"></rect><rect x="171.75" y="4" width="1" height="3.5" fill="#999"></rect><rect x="176.11" y="5.2" width="1" height="1.2" fill="#aaa"></rect><rect x="180.48" y="4" width="1" height="3.5" fill="#999"></rect><rect x="184.84" y="5.2" width="1" height="1.2" fill="#aaa"></rect><text x="189.70" y="9.3" font-family="Liberation Sans" font-size="9.5" fill="#333" text-anchor="middle">4</text><rect x="193.56" y="5.2" width="1" height="1.2" fill="#aaa"></rect><rect x="197.93" y="4" width="1" height="3.5" fill="#999"></rect><rect x="202.29" y="5.2" width="1" height="1.2" fill="#aaa"></rect><rect x="206.65" y="4" width="1" height="3.5" fill="#999"></rect><rect x="211.01" y="5.2" width="1" height="1.2" fill="#aaa"></rect><rect x="215.38" y="4" width="1" height="3.5" fill="#999"></rect><rect x="219.74" y="5.2" width="1" height="1.2" fill="#aaa"></rect><text x="224.60" y="9.3" font-family="Liberation Sans" font-size="9.5" fill="#333" text-anchor="middle">2</text><rect x="228.46" y="5.2" width="1" height="1.2" fill="#aaa"></rect><rect x="232.82" y="4" width="1" height="3.5" fill="#999"></rect><rect x="237.19" y="5.2" width="1" height="1.2" fill="#aaa"></rect><rect x="241.55" y="4" width="1" height="3.5" fill="#999"></rect><rect x="245.91" y="5.2" width="1" height="1.2" fill="#aaa"></rect><rect x="250.28" y="4" width="1" height="3.5" fill="#999"></rect><rect x="254.64" y="5.2" width="1" height="1.2" fill="#aaa"></rect><text x="259.50" y="9.3" font-family="Liberation Sans" font-size="9.5" fill="#333" text-anchor="middle">0</text><rect x="263.36" y="5.2" width="1" height="1.2" fill="#aaa"></rect><rect x="267.73" y="4" width="1" height="3.5" fill="#999"></rect><rect x="272.09" y="5.2" width="1" height="1.2" fill="#aaa"></rect><rect x="276.45" y="4" width="1" height="3.5" fill="#999"></rect><rect x="280.81" y="5.2" width="1" height="1.2" fill="#aaa"></rect><rect x="285.18" y="4" width="1" height="3.5" fill="#999"></rect><rect x="289.54" y="5.2" width="1" height="1.2" fill="#aaa"></rect><text x="294.40" y="9.3" font-family="Liberation Sans" font-size="9.5" fill="#333" text-anchor="middle">2</text><rect x="298.26" y="5.2" width="1" height="1.2" fill="#aaa"></rect><rect x="302.62" y="4" width="1" height="3.5" fill="#999"></rect><rect x="306.99" y="5.2" width="1" height="1.2" fill="#aaa"></rect><rect x="311.35" y="4" width="1" height="3.5" fill="#999"></rect><rect x="315.71" y="5.2" width="1" height="1.2" fill="#aaa"></rect><rect x="320.07" y="4" width="1" height="3.5" fill="#999"></rect><rect x="324.44" y="5.2" width="1" height="1.2" fill="#aaa"></rect><text x="329.30" y="9.3" font-family="Liberation Sans" font-size="9.5" fill="#333" text-anchor="middle">4</text><rect x="333.16" y="5.2" width="1" height="1.2" fill="#aaa"></rect><rect x="337.52" y="4" width="1" height="3.5" fill="#999"></rect><rect x="341.89" y="5.2" width="1" height="1.2" fill="#aaa"></rect><rect x="346.25" y="4" width="1" height="3.5" fill="#999"></rect><rect x="350.61" y="5.2" width="1" height="1.2" fill="#aaa"></rect><rect x="354.98" y="4" width="1" height="3.5" fill="#999"></rect><rect x="359.34" y="5.2" width="1" height="1.2" fill="#aaa"></rect><text x="364.20" y="9.3" font-family="Liberation Sans" font-size="9.5" fill="#333" text-anchor="middle">6</text><rect x="368.06" y="5.2" width="1" height="1.2" fill="#aaa"></rect><rect x="372.43" y="4" width="1" height="3.5" fill="#999"></rect><rect x="376.79" y="5.2" width="1" height="1.2" fill="#aaa"></rect><rect x="381.15" y="4" width="1" height="3.5" fill="#999"></rect><rect x="385.51" y="5.2" width="1" height="1.2" fill="#aaa"></rect><rect x="389.88" y="4" width="1" height="3.5" fill="#999"></rect><rect x="394.24" y="5.2" width="1" height="1.2" fill="#aaa"></rect><text x="399.10" y="9.3" font-family="Liberation Sans" font-size="9.5" fill="#333" text-anchor="middle">8</text><rect x="402.96" y="5.2" width="1" height="1.2" fill="#aaa"></rect><rect x="407.32" y="4" width="1" height="3.5" fill="#999"></rect><rect x="411.69" y="5.2" width="1" height="1.2" fill="#aaa"></rect><rect x="416.05" y="4" width="1" height="3.5" fill="#999"></rect><rect x="420.41" y="5.2" width="1" height="1.2" fill="#aaa"></rect><rect x="424.77" y="4" width="1" height="3.5" fill="#999"></rect><rect x="429.14" y="5.2" width="1" height="1.2" fill="#aaa"></rect><text x="434.00" y="9.3" font-family="Liberation Sans" font-size="9.5" fill="#333" text-anchor="middle">10</text><rect x="437.86" y="5.2" width="1" height="1.2" fill="#aaa"></rect><rect x="442.23" y="4" width="1" height="3.5" fill="#999"></rect><rect x="446.59" y="5.2" width="1" height="1.2" fill="#aaa"></rect><rect x="450.95" y="4" width="1" height="3.5" fill="#999"></rect><rect x="455.31" y="5.2" width="1" height="1.2" fill="#aaa"></rect><rect x="459.67" y="4" width="1" height="3.5" fill="#999"></rect><rect x="464.04" y="5.2" width="1" height="1.2" fill="#aaa"></rect><text x="468.90" y="9.3" font-family="Liberation Sans" font-size="9.5" fill="#333" text-anchor="middle">12</text><rect x="472.76" y="5.2" width="1" height="1.2" fill="#aaa"></rect><rect x="477.12" y="4" width="1" height="3.5" fill="#999"></rect><rect x="481.49" y="5.2" width="1" height="1.2" fill="#aaa"></rect><rect x="485.85" y="4" width="1" height="3.5" fill="#999"></rect><rect x="490.21" y="5.2" width="1" height="1.2" fill="#aaa"></rect><rect x="494.57" y="4" width="1" height="3.5" fill="#999"></rect><rect x="498.94" y="5.2" width="1" height="1.2" fill="#aaa"></rect><text x="503.80" y="9.3" font-family="Liberation Sans" font-size="9.5" fill="#333" text-anchor="middle">14</text><rect x="507.66" y="5.2" width="1" height="1.2" fill="#aaa"></rect><rect x="512.02" y="4" width="1" height="3.5" fill="#999"></rect><rect x="516.39" y="5.2" width="1" height="1.2" fill="#aaa"></rect></svg>
<div class="a" style="left:328px;top:257px;width:11px;height:368px;background:#fff;border:1px solid #e2e2e2"></div>
<svg class="a" style="left:328px;top:257px" width="11" height="368"><rect x="5.2" y="3.94" width="1.2" height="1" fill="#aaa"></rect><text x="0" y="0" transform="translate(8.3 8.80) rotate(-90)" font-family="Liberation Sans" font-size="9.5" fill="#333" text-anchor="middle">10</text><rect x="5.2" y="12.66" width="1.2" height="1" fill="#aaa"></rect><rect x="4" y="17.03" width="3.5" height="1" fill="#999"></rect><rect x="5.2" y="21.39" width="1.2" height="1" fill="#aaa"></rect><rect x="4" y="25.75" width="3.5" height="1" fill="#999"></rect><rect x="5.2" y="30.11" width="1.2" height="1" fill="#aaa"></rect><rect x="4" y="34.48" width="3.5" height="1" fill="#999"></rect><rect x="5.2" y="38.84" width="1.2" height="1" fill="#aaa"></rect><text x="0" y="0" transform="translate(8.3 43.70) rotate(-90)" font-family="Liberation Sans" font-size="9.5" fill="#333" text-anchor="middle">8</text><rect x="5.2" y="47.56" width="1.2" height="1" fill="#aaa"></rect><rect x="4" y="51.93" width="3.5" height="1" fill="#999"></rect><rect x="5.2" y="56.29" width="1.2" height="1" fill="#aaa"></rect><rect x="4" y="60.65" width="3.5" height="1" fill="#999"></rect><rect x="5.2" y="65.01" width="1.2" height="1" fill="#aaa"></rect><rect x="4" y="69.38" width="3.5" height="1" fill="#999"></rect><rect x="5.2" y="73.74" width="1.2" height="1" fill="#aaa"></rect><text x="0" y="0" transform="translate(8.3 78.60) rotate(-90)" font-family="Liberation Sans" font-size="9.5" fill="#333" text-anchor="middle">6</text><rect x="5.2" y="82.46" width="1.2" height="1" fill="#aaa"></rect><rect x="4" y="86.83" width="3.5" height="1" fill="#999"></rect><rect x="5.2" y="91.19" width="1.2" height="1" fill="#aaa"></rect><rect x="4" y="95.55" width="3.5" height="1" fill="#999"></rect><rect x="5.2" y="99.91" width="1.2" height="1" fill="#aaa"></rect><rect x="4" y="104.28" width="3.5" height="1" fill="#999"></rect><rect x="5.2" y="108.64" width="1.2" height="1" fill="#aaa"></rect><text x="0" y="0" transform="translate(8.3 113.50) rotate(-90)" font-family="Liberation Sans" font-size="9.5" fill="#333" text-anchor="middle">4</text><rect x="5.2" y="117.36" width="1.2" height="1" fill="#aaa"></rect><rect x="4" y="121.73" width="3.5" height="1" fill="#999"></rect><rect x="5.2" y="126.09" width="1.2" height="1" fill="#aaa"></rect><rect x="4" y="130.45" width="3.5" height="1" fill="#999"></rect><rect x="5.2" y="134.81" width="1.2" height="1" fill="#aaa"></rect><rect x="4" y="139.18" width="3.5" height="1" fill="#999"></rect><rect x="5.2" y="143.54" width="1.2" height="1" fill="#aaa"></rect><text x="0" y="0" transform="translate(8.3 148.40) rotate(-90)" font-family="Liberation Sans" font-size="9.5" fill="#333" text-anchor="middle">2</text><rect x="5.2" y="152.26" width="1.2" height="1" fill="#aaa"></rect><rect x="4" y="156.62" width="3.5" height="1" fill="#999"></rect><rect x="5.2" y="160.99" width="1.2" height="1" fill="#aaa"></rect><rect x="4" y="165.35" width="3.5" height="1" fill="#999"></rect><rect x="5.2" y="169.71" width="1.2" height="1" fill="#aaa"></rect><rect x="4" y="174.08" width="3.5" height="1" fill="#999"></rect><rect x="5.2" y="178.44" width="1.2" height="1" fill="#aaa"></rect><text x="0" y="0" transform="translate(8.3 183.30) rotate(-90)" font-family="Liberation Sans" font-size="9.5" fill="#333" text-anchor="middle">0</text><rect x="5.2" y="187.16" width="1.2" height="1" fill="#aaa"></rect><rect x="4" y="191.53" width="3.5" height="1" fill="#999"></rect><rect x="5.2" y="195.89" width="1.2" height="1" fill="#aaa"></rect><rect x="4" y="200.25" width="3.5" height="1" fill="#999"></rect><rect x="5.2" y="204.61" width="1.2" height="1" fill="#aaa"></rect><rect x="4" y="208.98" width="3.5" height="1" fill="#999"></rect><rect x="5.2" y="213.34" width="1.2" height="1" fill="#aaa"></rect><text x="0" y="0" transform="translate(8.3 218.20) rotate(-90)" font-family="Liberation Sans" font-size="9.5" fill="#333" text-anchor="middle">2</text><rect x="5.2" y="222.06" width="1.2" height="1" fill="#aaa"></rect><rect x="4" y="226.43" width="3.5" height="1" fill="#999"></rect><rect x="5.2" y="230.79" width="1.2" height="1" fill="#aaa"></rect><rect x="4" y="235.15" width="3.5" height="1" fill="#999"></rect><rect x="5.2" y="239.51" width="1.2" height="1" fill="#aaa"></rect><rect x="4" y="243.88" width="3.5" height="1" fill="#999"></rect><rect x="5.2" y="248.24" width="1.2" height="1" fill="#aaa"></rect><text x="0" y="0" transform="translate(8.3 253.10) rotate(-90)" font-family="Liberation Sans" font-size="9.5" fill="#333" text-anchor="middle">4</text><rect x="5.2" y="256.96" width="1.2" height="1" fill="#aaa"></rect><rect x="4" y="261.32" width="3.5" height="1" fill="#999"></rect><rect x="5.2" y="265.69" width="1.2" height="1" fill="#aaa"></rect><rect x="4" y="270.05" width="3.5" height="1" fill="#999"></rect><rect x="5.2" y="274.41" width="1.2" height="1" fill="#aaa"></rect><rect x="4" y="278.77" width="3.5" height="1" fill="#999"></rect><rect x="5.2" y="283.14" width="1.2" height="1" fill="#aaa"></rect><text x="0" y="0" transform="translate(8.3 288.00) rotate(-90)" font-family="Liberation Sans" font-size="9.5" fill="#333" text-anchor="middle">6</text><rect x="5.2" y="291.86" width="1.2" height="1" fill="#aaa"></rect><rect x="4" y="296.23" width="3.5" height="1" fill="#999"></rect><rect x="5.2" y="300.59" width="1.2" height="1" fill="#aaa"></rect><rect x="4" y="304.95" width="3.5" height="1" fill="#999"></rect><rect x="5.2" y="309.31" width="1.2" height="1" fill="#aaa"></rect><rect x="4" y="313.68" width="3.5" height="1" fill="#999"></rect><rect x="5.2" y="318.04" width="1.2" height="1" fill="#aaa"></rect><text x="0" y="0" transform="translate(8.3 322.90) rotate(-90)" font-family="Liberation Sans" font-size="9.5" fill="#333" text-anchor="middle">8</text><rect x="5.2" y="326.76" width="1.2" height="1" fill="#aaa"></rect><rect x="4" y="331.12" width="3.5" height="1" fill="#999"></rect><rect x="5.2" y="335.49" width="1.2" height="1" fill="#aaa"></rect><rect x="4" y="339.85" width="3.5" height="1" fill="#999"></rect><rect x="5.2" y="344.21" width="1.2" height="1" fill="#aaa"></rect><rect x="4" y="348.58" width="3.5" height="1" fill="#999"></rect><rect x="5.2" y="352.94" width="1.2" height="1" fill="#aaa"></rect><text x="0" y="0" transform="translate(8.3 357.80) rotate(-90)" font-family="Liberation Sans" font-size="9.5" fill="#333" text-anchor="middle">10</text><rect x="5.2" y="361.66" width="1.2" height="1" fill="#aaa"></rect></svg>
<!-- cursor -->
<svg class="a" style="left:472px;top:332px" width="12" height="18"><path d="M1 1 V14 L4.2 11 L6.5 16.5 L8.6 15.6 L6.4 10.2 H10.5Z" fill="#111" stroke="#fff" stroke-width="0.8"></path></svg>
<!-- status bar -->
<div class="a" style="left:158px;top:657px;width:1043px;height:17px;background:#d24726"></div>
<div class="t sb" style="left: 164px; transform: scaleX(0.8963); transform-origin: 0px 0px;">DIAPOSITIVA 1 DE 28</div>
<svg class="a" style="left:262px;top:659px" width="13" height="12"><path d="M1 1.5 Q3.5 0.5 6 1.5 V11 Q3.5 10 1 11Z M6 1.5 Q8.5 0.5 11 1.5 M6 11 Q7 10.6 8 10.6" stroke="#fff" stroke-width="0.9" fill="none"></path><path d="M8.5 5 L11.5 9 M11.5 5 L8.5 9" stroke="#fff" stroke-width="0.9"></path></svg>
<div class="t sb" style="left: 287px; transform: scaleX(0.8683); transform-origin: 0px 0px;">ESPAÑOL (ECUADOR)</div>
<svg class="a" style="left:781px;top:660px" width="10" height="10"><path d="M5 0.5 L7.5 3 H2.5Z" fill="#fff"></path><path d="M1 4.5 H9 M1 6.5 H9 M1 8.5 H9" stroke="#fff" stroke-width="1"></path></svg>
<div class="t sb" style="left: 794px; transform: scaleX(0.9228); transform-origin: 0px 0px;">NOTAS</div>
<svg class="a" style="left:836px;top:660px" width="11" height="11"><path d="M0.5 0.5 H10.5 V7.5 H5 L2.5 10 V7.5 H0.5Z" fill="#fff"></path></svg>
<div class="t sb" style="left: 849px; transform: scaleX(0.8968); transform-origin: 0px 0px;">COMENTARIOS</div>
<div class="a" style="left:923px;top:657px;width:29px;height:17px;background:#b93b1e"></div>
<svg class="a" style="left:931px;top:659px" width="12" height="12"><rect x="0.5" y="0.5" width="10" height="10" fill="none" stroke="#fff" stroke-width="1"></rect><rect x="0.5" y="0.5" width="3" height="10" fill="#fff"></rect><rect x="5" y="3" width="5" height="3" fill="#fff"></rect></svg>
<svg class="a" style="left:960px;top:660px" width="12" height="11"><rect x="0" y="0" width="5" height="4.5" fill="#fff"></rect><rect x="6.5" y="0" width="5" height="4.5" fill="#fff"></rect><rect x="0" y="6" width="5" height="4.5" fill="#fff"></rect><rect x="6.5" y="6" width="5" height="4.5" fill="#fff"></rect></svg>
<svg class="a" style="left:988px;top:659px" width="14" height="12"><path d="M1 1.5 Q4 0.5 7 2 V11 Q4 9.5 1 10.5Z M7 2 Q10 0.5 13 1.5 V10.5 Q10 9.5 7 11" stroke="#fff" stroke-width="1" fill="none"></path><path d="M2.5 4 H5.5 M2.5 6 H5.5 M2.5 8 H5.5 M8.5 4 H11.5 M8.5 6 H11.5 M8.5 8 H11.5" stroke="#fff" stroke-width="0.7"></path></svg>
<svg class="a" style="left:1018px;top:659px" width="12" height="12"><path d="M0.5 1 H11.5" stroke="#fff" stroke-width="1.2"></path><rect x="1.5" y="2" width="9" height="5" fill="none" stroke="#fff" stroke-width="1"></rect><path d="M6 7 V10 M3.5 11 L6 9 L8.5 11" stroke="#fff" stroke-width="1" fill="none"></path></svg>
<div class="a" style="left:1043px;top:665px;width:5px;height:1px;background:#fff"></div>
<div class="a" style="left:1053px;top:665px;width:75px;height:1px;background:#fff"></div>
<div class="a" style="left:1072px;top:660px;width:3px;height:10px;background:#fff"></div>
<div class="a" style="left:1090px;top:663px;width:1px;height:4px;background:#fff"></div>
<svg class="a" style="left:1130px;top:661px" width="8" height="8"><path d="M4 0 V8 M0 4 H8" stroke="#fff" stroke-width="1.3"></path></svg>
<div class="t sb" style="left: 1148px; transform: scaleX(0.9261); transform-origin: 0px 0px;">60 %</div>
<svg class="a" style="left:1176px;top:659px" width="12" height="12"><rect x="0.5" y="0.5" width="11" height="11" fill="none" stroke="#fff" stroke-width="1"></rect><path d="M3 3 L5 5 M9 3 L7 5 M3 9 L5 7 M9 9 L7 7" stroke="#fff" stroke-width="1"></path><path d="M2.5 2.5 H4.5 M2.5 2.5 V4.5 M9.5 2.5 H7.5 M9.5 2.5 V4.5 M2.5 9.5 H4.5 M2.5 9.5 V7.5 M9.5 9.5 H7.5 M9.5 9.5 V7.5" stroke="#fff" stroke-width="1"></path></svg>
<svg width="0" height="0" style="position:absolute"><defs>
<symbol id="s1" viewBox="0 0 520 368">
<rect width="520" height="368" fill="#31449d"></rect>
<path d="M0,0 L7.4,0 L7.4,4 Q7.4,9 14,13 L62.5,39 L62.5,72 Q62.5,84 52,84 Q47,84 43,79 L0,32 Z" fill="#292c5b"></path>
<path d="M7.4,0 L85.4,0 L93,30 Q96,42 85,46 L14,13 Q7.4,9 7.4,4 Z" fill="#efb600"></path>
<path d="M0,32 L32,67 L20,100 Q15,113 8,110 Q2,107 0,100 Z" fill="#dc1f26"></path>
<path d="M465,257.6 L485,197 Q491,182 503,186 Q512,189 520,205 L520,318 Z" fill="#efb600"></path>
<path d="M414,368 L414,245 Q414,228 430,228 Q437,228 443,234 L520,318 L520,368 Z" fill="#292c5b"></path>
<path d="M376,368 L363,318 Q359,297 375,292 Q380,291 386,294 L497,352 Q505,357 507,368 Z" fill="#dc1f26"></path>
<g font-family="Liberation Sans" font-size="27.2" fill="#fff" text-anchor="middle">
<text x="240.5" y="147">DIRECCIÓN DE</text>
<text x="240.5" y="180">CAPACITACIÓN Y</text>
<text x="240.5" y="212.4">CERTIFICACIÓN</text>
</g>
</symbol>
</defs></svg>
<!-- main slide -->
<svg class="a" style="left:507px;top:257px" width="520" height="368"><use href="#s1"></use></svg>
<!-- thumbnails -->
<div class="t" style="left:167px;top:245px;font-size:11px;color:#d24726">1</div>
<div class="a" style="left:176px;top:244px;width:118px;height:85px;border:2px solid #e8663f"></div>
<svg class="a" style="left:178px;top:246px" width="114" height="81" viewBox="0 0 520 368" preserveAspectRatio="none"><use href="#s1"></use></svg>
<div class="t" style="left:167px;top:342px;font-size:11px;color:#555">2</div>
<div class="a" style="left:178px;top:341px;width:115px;height:82px;border:1px solid #c8c8c8;background:#fff"></div>
<svg class="a" style="left:179px;top:342px" width="113" height="80" viewBox="0 0 113 80">
<path d="M6,1 L24,1 Q26,2 25,6 L23,11 Q22,13 19,12 Z" fill="#f7eec6"></path>
<path d="M3,1 L8,1 L18,15 Q19,19 16,21 Q14,22 12,20 L1,10 L1,3 Z" fill="#dcdbe8"></path>
<path d="M1,8 L9,18 L8,25 Q7,28 4,27 L1,24 Z" fill="#f5cdd5"></path>
<path d="M88,24 Q87,21 91,21 L112,20 L112,33 L96,40 Q92,41 91,38 Z" fill="#f7eec6"></path>
<path d="M91,47 Q89,44 92,41 L112,26 L112,50 L95,52 Q92,52 91,47 Z" fill="#dcdbe8"></path>
<path d="M99,60 L97,52 Q96,48 100,45 L112,36 L112,61 L103,62 Q100,62 99,60 Z" fill="#f5cdd5"></path>
<g font-family="Liberation Sans" font-weight="bold" font-size="5.6" fill="#2a2e5e" text-anchor="middle">
<text x="49.5" y="11.5">ESTUDIO DE</text><text x="49.5" y="18.2">DESAGREGACIÓN</text><text x="49.5" y="24.8">TECNOLÓGICA</text><text x="49.5" y="31.3">DIRIGIDO A ENTIDADES</text><text x="49.5" y="37.9">CONTRATANTES Y</text><text x="49.5" y="44.6">PROVEEDORES DEL</text><text x="49.5" y="51.2">ESTADO</text><text x="49.5" y="58">ENERO 2023</text>
</g>
<rect x="4.5" y="68" width="26" height="0.8" fill="#999"></rect>
<path d="M87,64 h11 v5 h-11z" fill="#8a96b0"></path><rect x="88" y="65" width="9" height="1" fill="#4a5a80"></rect><rect x="100" y="66" width="8" height="0.8" fill="#999"></rect>
</svg>
<div class="t" style="left:167px;top:438px;font-size:11px;color:#555">3</div>
<div class="a" style="left:178px;top:437px;width:115px;height:82px;border:1px solid #c8c8c8;background:#fff"></div>
<svg class="a" style="left:179px;top:438px" width="113" height="80" viewBox="0 0 113 80">
<path d="M1.5,3.5 L6.5,6.5 L1.5,9.5Z" fill="#2a2e5e"></path><rect x="7.5" y="5.8" width="10" height="1.4" fill="#6a6e9a"></rect>
<rect x="8" y="20" width="93" height="5" fill="#9e3538"></rect><rect x="8" y="20.5" width="9" height="3" fill="#e8c0c0"></rect>
<g fill="#dadada"><rect x="10" y="27" width="85" height="1"></rect><rect x="10" y="29.5" width="80" height="1"></rect><rect x="10" y="32" width="20" height="1"></rect></g>
<rect x="8" y="37" width="93" height="5" fill="#5b6b32"></rect><rect x="8" y="37.5" width="12" height="3" fill="#c8d0a8"></rect>
<g fill="#dadada"><rect x="10" y="44.5" width="70" height="1"></rect><rect x="10" y="49" width="85" height="1"></rect><rect x="10" y="51.5" width="30" height="1"></rect><rect x="10" y="56" width="88" height="1"></rect><rect x="10" y="58.5" width="40" height="1"></rect></g>
<rect x="79" y="69" width="14" height="4" rx="2" fill="#8a96b0"></rect><rect x="95" y="70" width="13" height="1.5" fill="#aaa"></rect>
<rect x="4" y="73" width="26" height="0.8" fill="#ccc"></rect>
</svg>
<div class="t" style="left:167px;top:533px;font-size:11px;color:#555">4</div>
<div class="a" style="left:178px;top:532px;width:115px;height:83px;border:1px solid #c8c8c8;background:#fff"></div>
<svg class="a" style="left:179px;top:533px" width="113" height="81" viewBox="0 0 113 81">
<path d="M1.5,3.5 L6.5,6.5 L1.5,9.5Z" fill="#2a2e5e"></path><rect x="10" y="5.8" width="65" height="1.4" fill="#7a7ea8"></rect>
<rect x="6" y="21" width="36" height="22" fill="#c9c6c6"></rect><path d="M30,33 L38,29 L40,36 L32,39Z" fill="#444"></path><path d="M6,28 L20,24 L25,30" stroke="#aaa" stroke-width="1" fill="none"></path>
<rect x="48" y="11" width="58" height="0.8" fill="#2e5aa8"></rect>
<g fill="#d6d6d6"><rect x="48" y="13" width="57" height="1"></rect><rect x="48" y="15.5" width="57" height="1"></rect><rect x="48" y="18" width="57" height="1"></rect><rect x="48" y="20.5" width="57" height="1"></rect><rect x="48" y="23" width="57" height="1"></rect><rect x="48" y="25.5" width="57" height="1"></rect><rect x="48" y="28" width="57" height="1"></rect><rect x="48" y="30.5" width="57" height="1"></rect><rect x="48" y="33" width="57" height="1"></rect><rect x="48" y="35.5" width="57" height="1"></rect><rect x="48" y="38" width="45" height="1"></rect></g>
<rect x="48" y="43" width="58" height="0.8" fill="#2e5aa8"></rect>
<g fill="#d6d6d6"><rect x="48" y="46" width="57" height="1"></rect><rect x="48" y="48.5" width="57" height="1"></rect><rect x="48" y="51" width="57" height="1"></rect><rect x="48" y="53.5" width="50" height="1"></rect><rect x="48" y="56" width="40" height="1"></rect></g>
<rect x="48" y="63" width="58" height="0.8" fill="#2e5aa8"></rect>
<rect x="79" y="68" width="14" height="4" rx="2" fill="#8a96b0"></rect><rect x="95" y="69" width="13" height="1.5" fill="#aaa"></rect>
<rect x="4" y="73" width="26" height="0.8" fill="#ccc"></rect><rect x="55" y="74" width="30" height="0.8" fill="#ddd"></rect>
</svg>
<div class="t" style="left:167px;top:629px;font-size:11px;color:#555">5</div>
<div class="a" style="left:178px;top:628px;width:115px;height:29px;border:1px solid #c8c8c8;border-bottom:none;background:#fff"></div>
<svg class="a" style="left:179px;top:629px" width="113" height="28" viewBox="0 0 113 28">
<path d="M1.5,3.5 L6.5,6.5 L1.5,9.5Z" fill="#2a2e5e"></path><rect x="10" y="5.8" width="65" height="1.4" fill="#7a7ea8"></rect>
<rect x="48" y="11" width="58" height="0.8" fill="#2e5aa8"></rect>
<g fill="#d6d6d6"><rect x="48" y="13" width="57" height="1"></rect><rect x="48" y="15.5" width="57" height="1"></rect><rect x="48" y="18" width="57" height="1"></rect><rect x="48" y="20.5" width="57" height="1"></rect><rect x="48" y="23" width="57" height="1"></rect></g>
<path d="M10,28 Q14,20 20,21 Q25,18 30,24 L31,28Z" fill="#b08850"></path>
</svg>
<!-- zoom toolbar -->
<svg class="a" style="left:36px;top:679px" width="28" height="26"><rect x="9.5" y="2" width="9" height="15.5" rx="4.5" fill="#a6a6a6"></rect><path d="M6.5 12.5 a7.5 7.5 0 0 0 15 0" stroke="#a6a6a6" stroke-width="1.7" fill="none"></path><path d="M14 20 V23.5 M10 23.8 H18" stroke="#a6a6a6" stroke-width="1.8"></path><path d="M2.8 24.4 L24.8 1.6" stroke="#1a1a1a" stroke-width="3.6"></path><path d="M2.8 24.4 L24.8 1.6" stroke="#e24b4b" stroke-width="1.6"></path></svg>
<svg class="a car" style="left:82px"><use href="#caret"></use></svg>
<div class="t tb" style="left: 10px; transform: scaleX(0.9653); transform-origin: 0px 0px;">Reactivar audio</div>
<svg class="a" style="left:134px;top:679px" width="28" height="26"><rect x="2" y="6" width="16.5" height="14" rx="2.5" fill="#a6a6a6"></rect><path d="M18.5 10.5 L26 6.5 V19.5 L18.5 15.5Z" fill="#a6a6a6"></path><path d="M3 24.4 L25.5 1.6" stroke="#1a1a1a" stroke-width="3.6"></path><path d="M3 24.4 L25.5 1.6" stroke="#e24b4b" stroke-width="1.6"></path></svg>
<svg class="a car" style="left:180px"><use href="#caret"></use></svg>
<div class="t tb" style="left: 115px; transform: scaleX(0.9969); transform-origin: 0px 0px;">Iniciar vídeo</div>
<svg class="a" style="left:387px;top:683px" width="26" height="19"><circle cx="8" cy="5" r="4.3" fill="#a6a6a6"></circle><path d="M0.5 17.5 C0.5 11.5 3.5 10 8 10 C12.5 10 15.5 11.5 15.5 17.5Z" fill="#a6a6a6"></path><circle cx="18" cy="7" r="3.6" fill="#a6a6a6"></circle><path d="M13 17.5 C14 13 15.5 11.8 18.5 11.8 C22.5 11.8 24.5 13.5 24.5 17.5Z" fill="#a6a6a6" stroke="#1a1a1a" stroke-width="1"></path></svg>
<div class="t" style="left: 416px; top: 685px; font-size: 12px; color: rgb(200, 200, 200); transform: scaleX(0.9731); transform-origin: 0px 0px;">67</div>
<svg class="a car" style="left:448px"><use href="#caret"></use></svg>
<div class="t tb" style="left: 366px; transform: scaleX(0.9874); transform-origin: 0px 0px;">Participantes</div>
<svg class="a" style="left:499px;top:682px" width="23" height="21"><rect x="0.5" y="0.5" width="21" height="14" rx="3" fill="#a6a6a6"></rect><path d="M4 13 L4 20 L10 14Z" fill="#a6a6a6"></path></svg>
<svg class="a car" style="left:538px"><use href="#caret"></use></svg>
<div class="t tb" style="left: 498px; transform: scaleX(0.9267); transform-origin: 0px 0px;">Chat</div>
<svg class="a" style="left:600px;top:683px" width="24" height="18"><rect x="0" y="0" width="24" height="18" rx="2.5" fill="#23d160"></rect><path d="M12 4 V13.5 M8.2 8 L12 4.2 L15.8 8" stroke="#111" stroke-width="1.8" fill="none"></path></svg>
<div class="t tb" style="left: 563px; color: rgb(35, 209, 96); transform: scaleX(0.9944); transform-origin: 0px 0px;">Compartir pantalla</div>
<svg class="a" style="left:697px;top:681px" width="23" height="23"><circle cx="11.5" cy="11.5" r="9.6" fill="none" stroke="#a6a6a6" stroke-width="1.6"></circle><circle cx="11.5" cy="11.5" r="7.2" fill="#a6a6a6"></circle></svg>
<div class="t tb" style="left: 692px; transform: scaleX(0.9368); transform-origin: 0px 0px;">Grabar</div>
<svg class="a" style="left:793px;top:683px" width="24" height="18"><rect x="0" y="0" width="24" height="18" rx="2.5" fill="#a6a6a6"></rect><text x="12" y="13" font-family="Liberation Sans" font-weight="bold" font-size="10" fill="#1a1a1a" text-anchor="middle">CC</text></svg>
<svg class="a car" style="left:844px"><use href="#caret"></use></svg>
<div class="t tb" style="left: 757px; transform: scaleX(1.017); transform-origin: 0px 0px;">Mostrar subtítulos</div>
<svg class="a" style="left:890px;top:680px" width="26" height="23"><circle cx="11" cy="12.5" r="9.5" fill="#a6a6a6"></circle><circle cx="7.8" cy="10.8" r="1.3" fill="#1a1a1a"></circle><circle cx="14.2" cy="10.8" r="1.3" fill="#1a1a1a"></circle><path d="M6.8 14.3 Q11 18.5 15.2 14.3" stroke="#1a1a1a" stroke-width="1.5" fill="none"></path><circle cx="19.5" cy="4.5" r="4.5" fill="#1a1a1a"></circle><path d="M19.5 1 V8 M16 4.5 H23" stroke="#a6a6a6" stroke-width="1.4"></path></svg>
<div class="t tb" style="left: 871px; transform: scaleX(0.9409); transform-origin: 0px 0px;">Reacciones</div>
<svg class="a" style="left:972px;top:682px" width="22" height="21"><path d="M9 2 H4 Q1.5 2 1.5 4.5 V9 M1.5 13 V16 Q1.5 18.5 4 18.5 H15 Q18.5 18.5 18.5 16 V11" stroke="#a6a6a6" stroke-width="1.6" fill="none"></path><circle cx="15" cy="4.5" r="2.8" fill="none" stroke="#a6a6a6" stroke-width="1.6"></circle><circle cx="5" cy="13" r="2.3" fill="none" stroke="#a6a6a6" stroke-width="1.5"></circle></svg>
<div class="t tb" style="left: 949px; transform: scaleX(1.0093); transform-origin: 0px 0px;">Aplicaciones</div>
<svg class="a" style="left:1062px;top:682px" width="22" height="19"><path d="M6 14.5 H3 Q1 14.5 1 12.5 V3 Q1 1 3 1 H19 Q21 1 21 3 V9" stroke="#a6a6a6" stroke-width="1.6" fill="none"></path><rect x="9" y="11.5" width="12.5" height="5.5" rx="2.7" fill="#a6a6a6"></rect></svg>
<div class="t tb" style="left: 1052px; transform: scaleX(0.9542); transform-origin: 0px 0px;">Pizarras</div>
<div class="a" style="left:1287px;top:688px;width:60px;height:26px;background:#bb2727;border-radius:6px"></div>
<div class="t" style="left: 1304px; top: 694px; font-size: 13px; font-weight: bold; color: rgb(255, 255, 255); transform: scaleX(0.9579); transform-origin: 0px 0px;">Salir</div>
<!-- taskbar -->
<div class="a" style="left:0;top:728px;width:1360px;height:40px;background:#111"></div>
<svg class="a" style="left:15px;top:739px" width="18" height="18"><path d="M0.5 2.6 L7.6 1.6 V8.4 H0.5Z M8.6 1.4 L17.5 0.2 V8.4 H8.6Z M0.5 9.4 H7.6 V16.2 L0.5 15.2Z M8.6 9.4 H17.5 V17.6 L8.6 16.4Z" fill="#fff"></path></svg>
<svg class="a" style="left:63px;top:740px" width="19" height="18"><circle cx="11.3" cy="6.3" r="5.2" fill="none" stroke="#fff" stroke-width="1.3"></circle><path d="M7.6 10 L1 16.8" stroke="#fff" stroke-width="1.5"></path></svg>
<!-- edge -->
<svg class="a" style="left:110px;top:735px" width="26" height="26" viewBox="0 0 26 26"><defs><linearGradient id="eg1" x1="0" y1="0.2" x2="1" y2="0.8"><stop offset="0" stop-color="#35c3f3"></stop><stop offset="0.55" stop-color="#2fc7b0"></stop><stop offset="1" stop-color="#6ae86a"></stop></linearGradient><linearGradient id="eg2" x1="0" y1="0" x2="0.3" y2="1"><stop offset="0" stop-color="#2aa0ec"></stop><stop offset="1" stop-color="#0b74d0"></stop></linearGradient></defs>
<circle cx="13" cy="13" r="12.2" fill="url(#eg1)"></circle>
<path d="M1 13 Q1 7 6 7 Q11 6.5 13 10 Q11 11 10.5 13.5 Q10 19 15.5 20.5 Q20.5 21.5 23.5 18.5 Q21 25 13 25.2 Q1 25 1 13Z" fill="url(#eg2)"></path>
<path d="M5.5 11 Q9 7.5 13 10 Q10.8 11 10.5 13.5 Q10 19.5 16 20.5 Q20.5 21.5 23.5 18.5 Q21.5 24 15 25 Q7 25 5.5 18Z" fill="#0e5aa7"></path>
<circle cx="12.6" cy="12.4" r="2.6" fill="#111"></circle>
<path d="M10.2 13 Q11 17.5 15.5 18.3 Q19.5 18.8 23.6 16.8 L23.4 18.8 Q20 21.5 15.5 20.8 Q10.5 19.8 10.2 13Z" fill="#111"></path>
</svg>
<!-- chrome -->
<svg class="a" style="left:160px;top:736px" width="25" height="25" viewBox="0 0 24 24"><path d="M2.04 6.25 A11.5 11.5 0 0 1 21.96 6.25 L12 6.25 L7.02 14.875Z" fill="#db4437"></path><path d="M21.96 6.25 A11.5 11.5 0 0 1 12 23.5 L16.98 14.875 L12 6.25Z" fill="#fcc934"></path><path d="M12 23.5 A11.5 11.5 0 0 1 2.04 6.25 L7.02 14.875 L16.98 14.875Z" fill="#1e8e3e"></path><circle cx="12" cy="12" r="5.6" fill="#fff"></circle><circle cx="12" cy="12" r="4.5" fill="#4285f4"></circle></svg>
<!-- word -->
<svg class="a" style="left:208px;top:736px" width="26" height="24"><rect x="6" y="1" width="19" height="22" rx="1.5" fill="#2b7cd3"></rect><rect x="6" y="6.5" width="19" height="5.5" fill="#185abd"></rect><rect x="6" y="12" width="19" height="5.5" fill="#103f91"></rect><rect x="6" y="17.5" width="19" height="5.5" rx="1.5" fill="#103f91"></rect><rect x="0" y="5" width="13" height="13" rx="1.5" fill="#185abd"></rect><text x="6.5" y="15.5" font-family="Liberation Sans" font-weight="bold" font-size="10.5" fill="#fff" text-anchor="middle">W</text></svg>
<!-- explorer -->
<svg class="a" style="left:258px;top:737px" width="23" height="21"><path d="M0.5 2 Q0.5 0.5 2 0.5 H8 L10 2.5 H21 Q22.5 2.5 22.5 4 V19 Q22.5 20.5 21 20.5 H2 Q0.5 20.5 0.5 19Z" fill="#e8a92a"></path><rect x="0.5" y="5" width="22" height="15.5" rx="1" fill="#ffd35b"></rect><path d="M6 20.5 V13.5 H17 V20.5 H14 V16 H9 V20.5Z" fill="#3a96dd"></path></svg>
<div class="a" style="left:250px;top:766px;width:40px;height:2px;background:#76b9ed"></div>
<!-- excel -->
<svg class="a" style="left:307px;top:736px" width="26" height="24"><rect x="6" y="1" width="19" height="22" rx="1.5" fill="#21a366"></rect><rect x="15" y="1" width="10" height="11" fill="#33c481"></rect><rect x="6" y="12" width="19" height="11" rx="1.5" fill="#107c41"></rect><rect x="15" y="12" width="10" height="11" fill="#185c37"></rect><rect x="0" y="5" width="13" height="13" rx="1.5" fill="#107c41"></rect><text x="6.5" y="15.5" font-family="Liberation Sans" font-weight="bold" font-size="10.5" fill="#fff" text-anchor="middle">X</text></svg>
<!-- firefox -->
<svg class="a" style="left:356px;top:735px" width="25" height="26" viewBox="0 0 25 26"><defs><radialGradient id="ff" cx="0.6" cy="0.2" r="0.9"><stop offset="0" stop-color="#ffe226"></stop><stop offset="0.5" stop-color="#ff8a16"></stop><stop offset="1" stop-color="#e31587"></stop></radialGradient></defs><path d="M12.5 25 C5.5 25 1 20 1 14 C1 10 3 6.5 5 5 C5 7 6 8 7 8.5 C8 5 10.5 2.5 14 1 C13 3.5 14.5 5 16.5 6 C20 7.5 24 10 24 15 C24 21 19 25 12.5 25Z" fill="url(#ff)"></path><circle cx="12.5" cy="15" r="6" fill="#7542e5"></circle><path d="M7 14 C8 10.5 13 9.5 16 11.5 C13.5 11 11 12 10.5 14Z" fill="#ff9a1c"></path></svg>
<!-- spotify -->
<svg class="a" style="left:405px;top:736px" width="24" height="24"><circle cx="12" cy="12" r="11.5" fill="#1ed760"></circle><path d="M5.5 8.8 Q12 6.5 18.8 9.8 M6.2 12.4 Q12 10.6 17.6 13.2 M6.8 15.8 Q11.5 14.4 16.4 16.5" stroke="#111" stroke-width="1.9" fill="none" stroke-linecap="round"></path></svg>
<div class="a" style="left:397px;top:766px;width:40px;height:2px;background:#76b9ed"></div>
<!-- chrome profile -->
<svg class="a" style="left:454px;top:736px" width="25" height="25" viewBox="0 0 24 24"><path d="M2.04 6.25 A11.5 11.5 0 0 1 21.96 6.25 L12 6.25 L7.02 14.875Z" fill="#db4437"></path><path d="M21.96 6.25 A11.5 11.5 0 0 1 12 23.5 L16.98 14.875 L12 6.25Z" fill="#fcc934"></path><path d="M12 23.5 A11.5 11.5 0 0 1 2.04 6.25 L7.02 14.875 L16.98 14.875Z" fill="#1e8e3e"></path><circle cx="12" cy="12" r="5.6" fill="#fff"></circle><circle cx="12" cy="12" r="4.5" fill="#4285f4"></circle></svg>
<svg class="a" style="left:464px;top:746px" width="16" height="16"><circle cx="8" cy="8" r="7.6" fill="#9a9a9a" stroke="#111" stroke-width="0.8"></circle><path d="M3 5 Q8 1 13 5 L12 12 Q8 15 4 12Z" fill="#e6e6e6"></path><circle cx="5.8" cy="7" r="1.4" fill="#333"></circle><circle cx="10.2" cy="7" r="1.4" fill="#333"></circle><path d="M6 11 Q8 9.5 10 11 L8 13Z" fill="#444"></path></svg>
<div class="a" style="left:446px;top:766px;width:40px;height:2px;background:#76b9ed"></div>
<!-- obs -->
<svg class="a" style="left:503px;top:736px" width="25" height="25" viewBox="0 0 25 25"><circle cx="12.5" cy="12.5" r="11" fill="#2b2a2d" stroke="#d0d0d0" stroke-width="1.3"></circle>
<g fill="none" stroke="#cfcfcf" stroke-width="1.4"><path d="M8.5 6.5 Q12.5 4 15.5 6.5 Q17 8.5 15 10.5"></path><path d="M6 15 Q5 10.5 8.5 8.8 Q11 8 12 10.5"></path><path d="M17.5 17.5 Q14 20.5 10.5 18.5 Q9 17 10.5 14.5"></path></g>
<circle cx="12.5" cy="9" r="2.6" fill="#cfcfcf" opacity="0.0"></circle></svg>
<div class="a" style="left:495px;top:766px;width:40px;height:2px;background:#76b9ed"></div>
<!-- zoom -->
<svg class="a" style="left:552px;top:736px" width="24" height="24"><rect x="0" y="0" width="24" height="24" rx="6" fill="#4a8cf7"></rect><rect x="4" y="7.5" width="10.5" height="9" rx="2" fill="#fff"></rect><path d="M15.2 10.6 L20 7.6 V16.4 L15.2 13.4Z" fill="#fff"></path></svg>
<div class="a" style="left:544px;top:766px;width:40px;height:2px;background:#76b9ed"></div>
<!-- tray -->
<svg class="a" style="left:1092px;top:743px" width="14" height="9"><path d="M1 8 L7 2 L13 8" stroke="#fff" stroke-width="1.2" fill="none"></path></svg>
<svg class="a" style="left:1117px;top:740px" width="14" height="17"><path d="M2.5 4 Q2.5 1.5 5 1.5 H8.5 Q11 1.5 11 4 M2.5 12.5 Q2.5 15.5 5 15.5 H8.5 Q11 15.5 11 12.5" stroke="#fff" stroke-width="1.1" fill="none"></path><rect x="1.5" y="6" width="8" height="5.5" rx="1" fill="none" stroke="#fff" stroke-width="1.1"></rect><path d="M10 8.7 L12.8 6.8 V11 L10 9.3" stroke="#fff" stroke-width="1" fill="none"></path></svg>
<svg class="a" style="left:1138px;top:741px" width="18" height="16"><rect x="4.5" y="1.5" width="13" height="9.5" fill="none" stroke="#fff" stroke-width="1.1"></rect><path d="M11 11 V14 M7 14.5 H15" stroke="#fff" stroke-width="1.1"></path><rect x="0.5" y="3.5" width="4.5" height="5" fill="#111" stroke="#fff" stroke-width="1"></rect><path d="M2.7 8.5 V13" stroke="#fff" stroke-width="1"></path></svg>
<svg class="a" style="left:1162px;top:741px" width="18" height="15"><path d="M1 5 H4.5 L8.5 1.5 V13.5 L4.5 10 H1Z" fill="none" stroke="#fff" stroke-width="1.1"></path><path d="M10.5 5 Q12 7.5 10.5 10 M13 3 Q15.8 7.5 13 12 M15.5 1 Q19.2 7.5 15.5 14" stroke="#fff" stroke-width="1.1" fill="none"></path></svg>
<svg class="a" style="left:1187px;top:739px" width="14" height="19"><rect x="4" y="1" width="6" height="11" rx="3" fill="#fff"></rect><path d="M1.5 9 Q1.5 14.5 7 14.5 Q12.5 14.5 12.5 9 M7 14.5 V17.5 M4 17.8 H10" stroke="#fff" stroke-width="1.1" fill="none"></path></svg>
<div class="t" style="left: 1215px; top: 742px; font-size: 11.5px; color: rgb(255, 255, 255); transform: scaleX(0.8473); transform-origin: 0px 0px;">ESP</div>
<div class="t" style="left: 1260px; top: 734px; font-size: 11.5px; color: rgb(255, 255, 255); transform: scaleX(0.9729); transform-origin: 0px 0px;">08:25</div>
<div class="t" style="left: 1248px; top: 751px; font-size: 12px; color: rgb(255, 255, 255); transform: scaleX(0.9927); transform-origin: 0px 0px;">30/1/2023</div>
<svg class="a" style="left:1318px;top:739px" width="19" height="18"><path d="M1 1 H18 V13 H12 L9.5 16 L7 13 H1Z" fill="none" stroke="#fff" stroke-width="1.1"></path></svg>
<div class="a" style="left:1355px;top:728px;width:1px;height:40px;background:#555"></div>
</body></html>
